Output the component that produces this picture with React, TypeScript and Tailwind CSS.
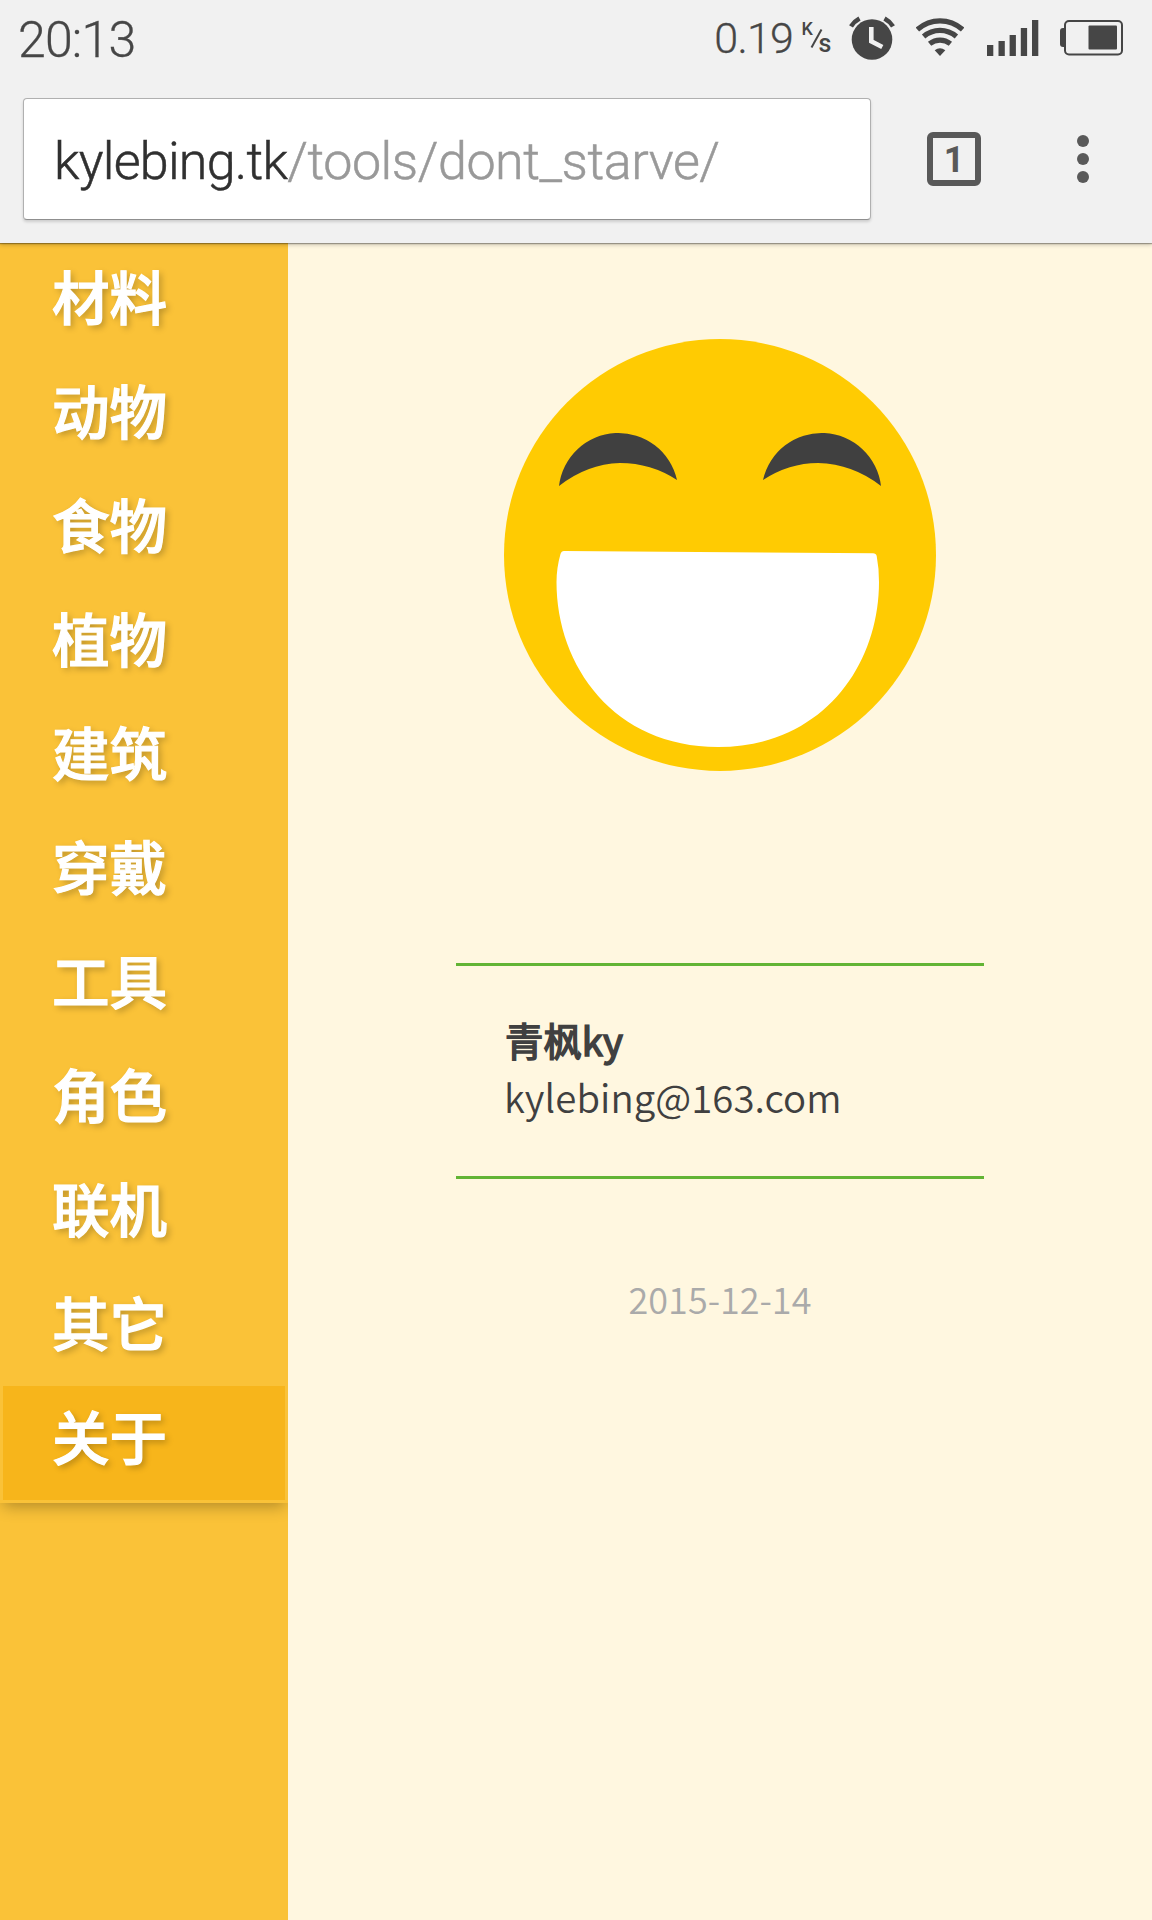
const MENU = ["材料", "动物", "食物", "植物", "建筑", "穿戴", "工具", "角色", "联机", "其它", "关于"]
const ACTIVE = "关于"

function AlarmIcon() {
  return (
    <svg width="46" height="44" viewBox="0 0 46 44" fill="#464646">
      <circle cx="23" cy="23.5" r="20.3" />
      <path d="M2 10.4 Q5 5.6 10.5 2.6" stroke="#464646" strokeWidth="4.6" fill="none" />
      <path d="M35.5 2.6 Q41 5.6 44 10.4" stroke="#464646" strokeWidth="4.6" fill="none" />
      <path d="M22.3 11 V25.3 L33.3 31" stroke="#f1f1f1" strokeWidth="4.6" fill="none" />
    </svg>
  )
}

function WifiIcon() {
  return (
    <svg width="48" height="40" viewBox="0 0 48 40" fill="none" stroke="#464646" strokeWidth="5.2">
      <path d="M1.4 11.6 C14.5 0 33.5 0 46.6 11.6" />
      <path d="M7.6 18.6 C17.2 10.4 30.8 10.4 40.4 18.6" />
      <path d="M13.6 25.8 C19.8 20.8 28.2 20.8 34.4 25.8" />
      <path d="M18.7 32.2 Q24 28.4 29.3 32.2 L24 38 Z" fill="#464646" stroke="none" />
    </svg>
  )
}

function SignalIcon() {
  return (
    <svg width="52" height="36" viewBox="0 0 52 36" fill="#464646">
      <rect x="0" y="25" width="6.3" height="11" />
      <rect x="11.5" y="21" width="6.3" height="15" />
      <rect x="22.6" y="15" width="6.3" height="21" />
      <rect x="33.8" y="8" width="6.3" height="28" />
      <rect x="45" y="0" width="6.3" height="36" />
    </svg>
  )
}

function BatteryIcon() {
  return (
    <svg width="64" height="36" viewBox="0 0 64 36">
      <path d="M4.5 8 H3 Q0 8 0 11 V24 Q0 27 3 27 H4.5 Z" fill="#464646" />
      <rect x="5" y="1" width="57" height="33.5" rx="4" fill="none" stroke="#464646" strokeWidth="2" />
      <rect x="28.5" y="5.5" width="28.5" height="24" rx="1" fill="#464646" />
    </svg>
  )
}

function StatusBar() {
  return (
    <div className="flex h-[76px] items-center justify-between pl-[18px] pr-[28px] font-light text-[#464646] [-webkit-text-stroke:0.3px]">
      <span className="pt-[3px] text-[50px] leading-[60px] tracking-[-0.8px]">20:13</span>
      <div className="flex items-center">
        <span className="pb-px text-[43px] leading-[52px] tracking-[-0.8px]">0.19</span>
        <svg width="34" height="46" viewBox="0 -6 34 46" className="ml-[8px] mr-[14px]" fill="#464646">
          <text x="0.5" y="14" fontSize="18" fontWeight="500">K</text>
          <path d="M10.5 26.5 L20.5 8.5" stroke="#464646" strokeWidth="2" />
          <text x="17.5" y="30.5" fontSize="25" fontWeight="500">s</text>
        </svg>
        <AlarmIcon />
        <div className="ml-[21px]"><WifiIcon /></div>
        <div className="ml-[23px]"><SignalIcon /></div>
        <div className="ml-[21px]"><BatteryIcon /></div>
      </div>
    </div>
  )
}

function AddressBar() {
  return (
    <div className="flex items-center pl-[23px] pt-[22px]">
      <div className="flex h-[122px] w-[848px] items-center rounded-[4px] border border-[#b0b0b0] border-b-[#8f8f8f] bg-white pl-[30px] text-[52px] font-light shadow-[0_2px_3px_rgba(0,0,0,0.15)]">
        <span className="whitespace-nowrap pt-[5px] tracking-[-0.75px] text-[#303030] [-webkit-text-stroke:0.5px]">
          kylebing.tk<span className="tracking-[-0.45px] text-[#999999]">/tools/dont_starve/</span>
        </span>
      </div>
      <div className="ml-[56px] flex h-[54px] w-[54px] items-center justify-center rounded-[6px] border-[6px] border-[#595959] pt-[2px] text-[36px] font-bold leading-none text-[#595959]">
        1
      </div>
      <div className="ml-[96px] flex flex-col gap-[6px]">
        <i className="h-3 w-3 rounded-full bg-[#595959]" />
        <i className="h-3 w-3 rounded-full bg-[#595959]" />
        <i className="h-3 w-3 rounded-full bg-[#595959]" />
      </div>
    </div>
  )
}

function Sidebar() {
  return (
    <nav className="w-[288px] shrink-0 overflow-hidden bg-[#fac238] px-[3px] pt-[3px]">
      {MENU.map((item) => (
        <a
          key={item}
          className={
            "flex h-[114px] items-center pb-[14px] pl-[49px] text-[57.6px] font-medium leading-none text-white [-webkit-text-stroke:1.2px_#fff] [text-shadow:3px_3px_6px_rgba(0,0,0,0.25)] " +
            (item === ACTIVE ? "bg-[#f7b51b] shadow-[0_0_0_3px_#fac238,0_6px_15px_rgba(0,0,0,0.3)] [clip-path:inset(-3px_-3px_-40px_-3px)]" : "")
          }
        >
          {item}
        </a>
      ))}
    </nav>
  )
}

function Smiley() {
  return (
    <svg width="432" height="432" viewBox="0 0 432 432">
      <circle cx="216" cy="216" r="216" fill="#ffcb02" />
      <path d="M55 147 A59.9 59.9 0 0 1 173 141 Q147 124 116 124 Q83 125 55 147 Z" fill="#404040" />
      <path d="M377 147 A59.9 59.9 0 0 0 259 141 Q285 124 314 124 Q349 125 377 147 Z" fill="#404040" />
      <path
        d="M60 212 L369 214.3 Q372 214.3 372.7 217 Q375 229 375 243 C375 327 318 408 214 408 C110 408 52.5 327 52.5 243 Q52.5 229 56.5 215 Q57.4 212 60 212 Z"
        fill="#ffffff"
      />
    </svg>
  )
}

export default function App() {
  return (
    <div className="flex h-[1920px] w-[1152px] flex-col overflow-hidden bg-[#fff7e0] font-[Roboto,'Noto_Sans_CJK_SC',sans-serif]">
      <header className="relative z-10 h-[243px] shrink-0 bg-[#f1f1f1] shadow-[0_1px_1px_rgba(0,0,0,0.3),0_2px_4px_rgba(0,0,0,0.2)]">
        <StatusBar />
        <AddressBar />
      </header>
      <div className="flex flex-1 font-['Noto_Sans_CJK_SC',sans-serif]">
        <Sidebar />
        <main className="flex flex-1 flex-col items-center pt-[96px]">
          <Smiley />
          <section className="mt-[192px] h-[216px] w-[528px] border-y-[3px] border-[#62b435] px-[48px] pt-[45px] text-[38.4px] leading-[57px] text-[#404040]">
            <p className="pl-px [-webkit-text-stroke:1.5px]">青枫ky</p>
            <p className="font-[350] tracking-[0.05px]">kylebing@163.com</p>
          </section>
          <p className="mt-[92px] text-[36px] font-[350] leading-[54px] text-[#aaaaaa]">2015-12-14</p>
        </main>
      </div>
    </div>
  )
}
